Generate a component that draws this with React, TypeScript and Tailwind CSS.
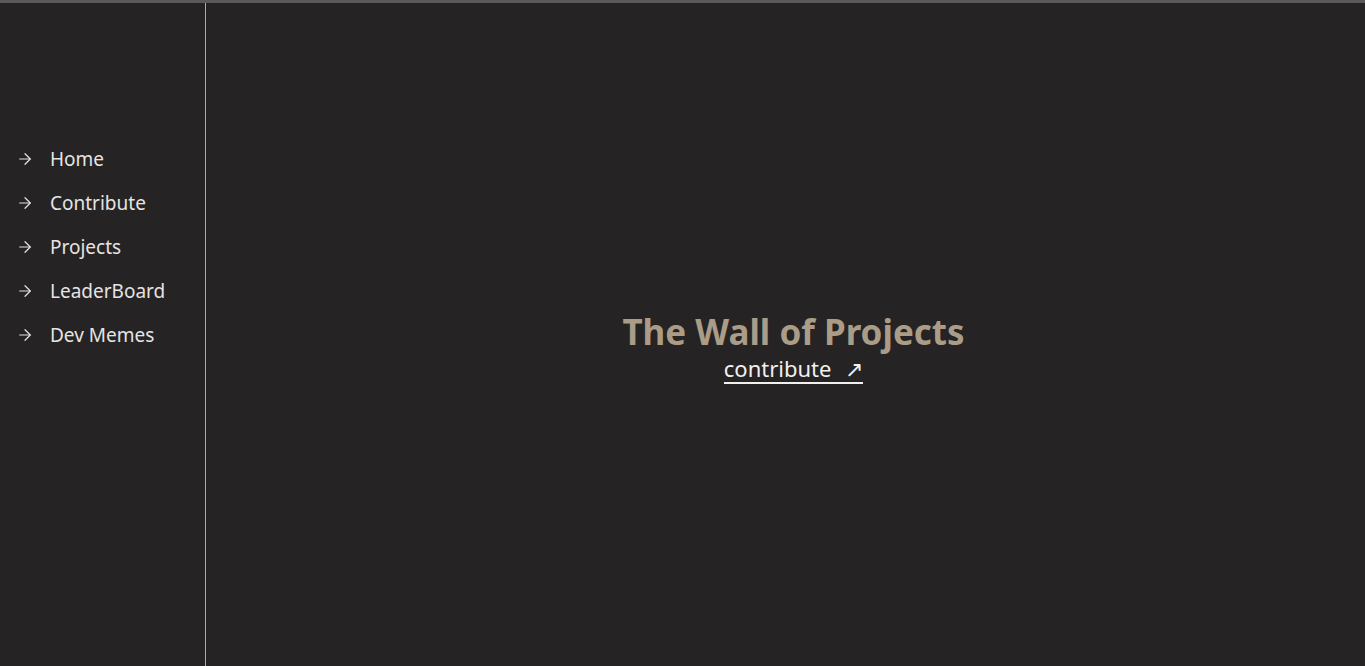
import { ArrowRight } from "lucide-react";

const links = ["Home", "Contribute", "Projects", "LeaderBoard", "Dev Memes"];

export default function App() {
    return <div className="flex h-[666px] w-full flex-col bg-[#252324] font-['Noto_Sans',sans-serif]">
        <div className="h-[3px] w-full bg-[#5a5a5a]"></div>

        <div className="flex flex-1">
            <aside className="flex w-[206px] flex-col gap-[18px] border-r border-[#b7aa9c] pt-[143px]">
                {links.map((l) => (
                    <a key={l} href="#" className="flex h-[26px] items-center text-[19px] text-[#e6e4e2]">
                        <ArrowRight className="ml-[16px] mr-[16px] h-[18px] w-[18px]" strokeWidth={1.6} />
                        {l}
                    </a>
                ))}
            </aside>

            <main className="flex flex-1 flex-col items-center justify-center pl-4 pt-[25px]">
                <h1 className="text-[35px] font-bold leading-[42px] text-[#ab9c88]">The Wall of Projects</h1>
                <a href="#" className="mt-[1px] border-b-2 border-[#f2f0ee] text-[22px] leading-[28px] text-[#f2f0ee]">
                    contribute <span className="ml-2">↗</span>
                </a>
            </main>
        </div>
    </div>
}
